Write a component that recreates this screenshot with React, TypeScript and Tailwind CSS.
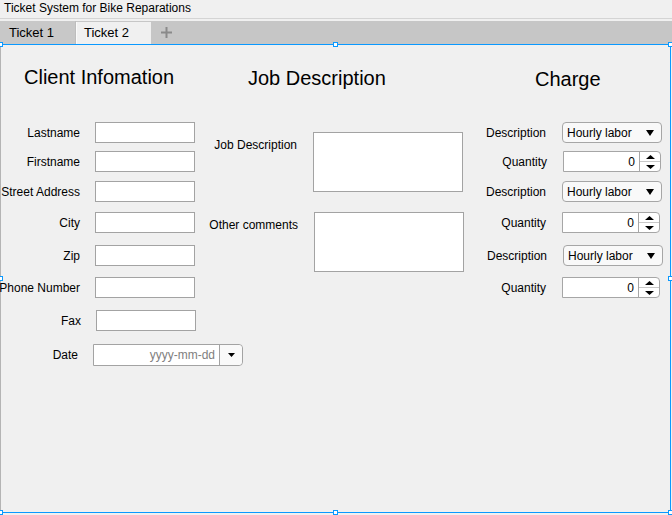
import React from 'react';

// MATLAB-style app designer canvas: ticket form with three columns

const FONT = { fontFamily: '"Liberation Sans", Arial, sans-serif' };

function Caret({ w = 8, h = 5 }: { w?: number; h?: number }) {
  return (
    <svg width={w} height={h} viewBox={`0 0 ${w} ${h}`}>
      <path d={`M0 0H${w}L${w / 2} ${h}Z`} fill="#000" />
    </svg>
  );
}

function CaretUp({ w = 9, h = 4 }: { w?: number; h?: number }) {
  return (
    <svg width={w} height={h} viewBox={`0 0 ${w} ${h}`}>
      <path d={`M0 ${h}H${w}L${w / 2} 0Z`} fill="#000" />
    </svg>
  );
}

const clientRows = [
  { label: 'Lastname', row: 'mt-[33px]', lw: 'w-[79px]', box: 'w-[100px]' },
  { label: 'Firstname', row: 'mt-[8px]', lw: 'w-[79px]', box: 'w-[100px]' },
  { label: 'Street Address', row: 'mt-[9px]', lw: 'w-[79px]', box: 'w-[100px]' },
  { label: 'City', row: 'mt-[10px]', lw: 'w-[79px]', box: 'w-[100px]' },
  { label: 'Zip', row: 'mt-[12px]', lw: 'w-[79px]', box: 'w-[100px]' },
  { label: 'Phone Number', row: 'mt-[11px]', lw: 'w-[79px]', box: 'w-[100px]' },
  { label: 'Fax', row: 'mt-[12px]', lw: 'w-[80px]', box: 'w-[100px]' },
];

const chargeRows = [
  { kind: 'desc', row: 'mt-[31px]', lw: 'w-[76px]' },
  { kind: 'qty', row: 'mt-[8px]', lw: 'w-[77px]' },
  { kind: 'desc', row: 'mt-[9px]', lw: 'w-[76px]' },
  { kind: 'qty', row: 'mt-[10px]', lw: 'w-[76px]' },
  { kind: 'desc', row: 'mt-[12px]', lw: 'w-[77px]' },
  { kind: 'qty', row: 'mt-[11px]', lw: 'w-[76px]' },
];

function Dropdown() {
  return (
    <div className="flex items-center justify-between w-[100px] h-[21px] rounded-[4px] border border-[#a6a6a6] bg-[#f9f9f9] pl-[4px] pr-[7px] text-[12px] text-black">
      <span>Hourly labor</span>
      <Caret w={8} h={6} />
    </div>
  );
}

function Spinner() {
  return (
    <div className="flex w-[98px] h-[21px] border border-[#a6a6a6] rounded-r-[4px] bg-white text-[12px]">
      <div className="flex-1 flex items-center justify-end pr-[4px] text-black">0</div>
      <div className="w-[21px] flex flex-col border-l border-[#a6a6a6]">
        <div className="flex-1 flex items-center justify-center border-b border-[#c8c8c8]">
          <CaretUp w={9} h={4} />
        </div>
        <div className="flex-1 flex items-center justify-center">
          <Caret w={9} h={4} />
        </div>
      </div>
    </div>
  );
}

const handles = [
  'top-[-3px] left-[-3px]',
  'top-[-3px] left-[332px]',
  'top-[-3px] left-[667px]',
  'top-[231px] left-[-3px]',
  'top-[231px] left-[667px]',
  'top-[465px] left-[-3px]',
  'top-[465px] left-[332px]',
  'top-[465px] left-[667px]',
];

export default function App() {
  return (
    <div className="w-[672px] h-[515px] bg-[#f0f0f0] overflow-hidden text-black" style={FONT}>
      {/* window title */}
      <div className="h-[19px] border-b border-[#d4d4d4] pl-[4px] text-[12px] leading-[17px]">
        Ticket System for Bike Reparations
      </div>
      <div className="h-[2px]" />

      {/* tab strip */}
      <div className="h-[23px] bg-[#c6c6c6] flex items-stretch text-[13px]">
        <div className="w-[76px] flex items-center pl-[9px] bg-[#c8c8c8] border-r border-[#bdbdbd]">Ticket 1</div>
        <div className="w-[75px] mt-[1px] flex items-center pl-[7px] bg-[#f0f0f0] border-l border-[#fafafa]">Ticket 2</div>
        <div className="w-[31px] flex items-center justify-center">
          <svg width="11" height="11" viewBox="0 0 11 11">
            <path d="M5.5 0V11M0 5.5H11" stroke="#8a8a8a" strokeWidth="2" />
          </svg>
        </div>
      </div>

      {/* selected tab panel */}
      <div className="relative w-[671px] h-[469px] border-t border-r border-b border-l border-t-[#0a99ff] border-r-[#0a99ff] border-b-[#0a99ff] border-l-[#b4b4b4] flex">
        {/* client column */}
        <div className="w-[199px] flex flex-col">
          <div className="mt-[21px] pl-[23px] text-[20px] leading-[23px] whitespace-nowrap">Client Infomation</div>
          {clientRows.map(r => (
            <div key={r.label} className={`flex items-center h-[21px] ${r.row}`}>
              <div className={`${r.lw} shrink-0 text-right text-[12px] whitespace-nowrap flex justify-end`}>{r.label}</div>
              <div className={`ml-[15px] ${r.box} h-[21px] shrink-0 bg-white border border-[#a3a3a3]`} />
            </div>
          ))}
          <div className="flex items-center h-[22px] mt-[13px]">
            <div className="w-[77px] shrink-0 text-right text-[12px]">Date</div>
            <div className="ml-[15px] w-[150px] h-[22px] shrink-0 flex border border-[#a3a3a3] rounded-r-[4px] bg-white text-[12px]">
              <div className="flex-1 flex items-center justify-end pr-[4px] text-[#808080]">yyyy-mm-dd</div>
              <div className="w-[23px] flex items-center justify-center border-l border-[#a3a3a3] bg-[#f9f9f9] rounded-r-[4px]">
                <Caret w={7} h={4} />
              </div>
            </div>
          </div>
        </div>

        {/* job column */}
        <div className="w-[270px] flex flex-col">
          <div className="mt-[22px] pl-[48px] text-[20px] leading-[23px] whitespace-nowrap">Job Description</div>
          <div className="flex items-start mt-[42px]">
            <div className="w-[97px] shrink-0 text-right text-[12px] leading-[14px] mt-[6px] whitespace-nowrap">Job Description</div>
            <div className="ml-[16px] w-[150px] h-[60px] bg-white border border-[#a3a3a3]" />
          </div>
          <div className="flex items-start mt-[20px]">
            <div className="w-[98px] shrink-0 text-right text-[12px] leading-[14px] mt-[6px] whitespace-nowrap">Other comments</div>
            <div className="ml-[16px] w-[150px] h-[60px] bg-white border border-[#a3a3a3]" />
          </div>
        </div>

        {/* charge column */}
        <div className="flex-1 flex flex-col">
          <div className="mt-[23px] pl-[65px] text-[20px] leading-[23px] whitespace-nowrap">Charge</div>
          {chargeRows.map((r, i) => (
            <div key={i} className={`flex items-center h-[21px] ${r.row}`}>
              <div className={`${r.lw} shrink-0 text-right text-[12px] whitespace-nowrap`}>
                {r.kind === 'desc' ? 'Description' : 'Quantity'}
              </div>
              <div className="ml-[16px]">{r.kind === 'desc' ? <Dropdown /> : <Spinner />}</div>
            </div>
          ))}
        </div>

        {handles.map(h => (
          <div key={h} className={`absolute ${h} w-[5px] h-[5px] bg-white border border-[#0a99ff]`} />
        ))}
      </div>
    </div>
  );
}
